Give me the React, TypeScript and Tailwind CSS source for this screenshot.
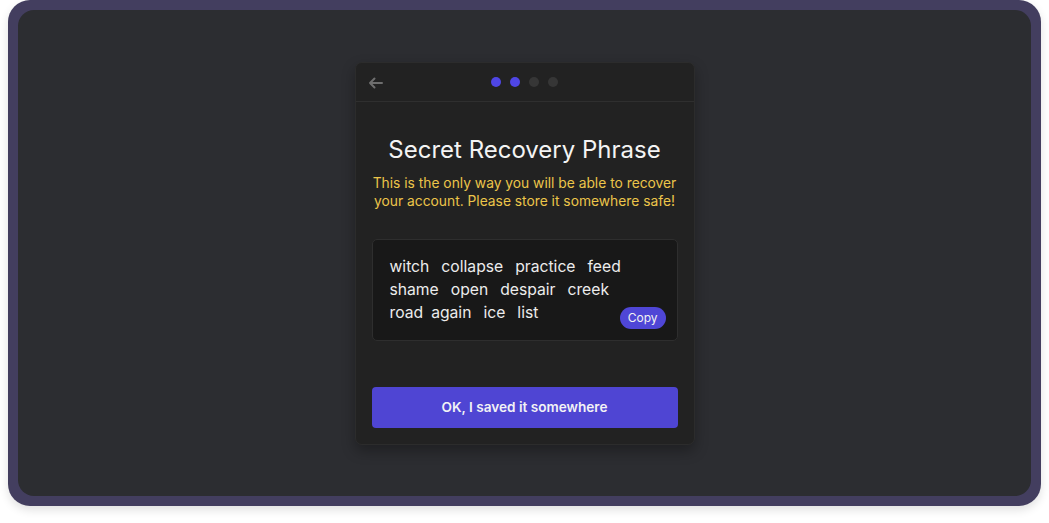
const rows = [
  ['witch', 'collapse', 'practice', 'feed'],
  ['shame', 'open', 'despair', 'creek'],
  ['road', 'again', 'ice', 'list'],
];

function Dots({ step, total }: { step: number; total: number }) {
  return (
    <div className="flex items-center gap-[9px]">
      {Array.from({ length: total }).map((_, i) => (
        <span
          key={i}
          className={`h-[10px] w-[10px] rounded-full ${i < step ? 'bg-[#4f46e5]' : 'bg-[#363636]'}`}
        />
      ))}
    </div>
  );
}

function BackArrow() {
  return (
    <svg width="15" height="12" viewBox="0 0 15 12" fill="none" className="absolute left-[12px] top-[14px]">
      <path d="M14 6H2M6.5 1.5L2 6l4.5 4.5" stroke="#6e6e6e" strokeWidth="2" strokeLinecap="round" strokeLinejoin="round" />
    </svg>
  );
}

export default function App() {
  return (
    <div className="bg-white h-[523px] w-[1049px] font-['Inter','Liberation_Sans',sans-serif]">
      <div className="mx-2 h-[506px] w-[1033px] rounded-[22px] bg-[#433e5f] p-[10px] shadow-[0_4px_10px_rgba(0,0,0,0.12)]">
        <div className="flex h-full items-center justify-center rounded-[16px] bg-[#2c2d31]">
          <div className="flex h-[383px] w-[340px] flex-col rounded-[7px] border border-[#2c2c2c] bg-[#222222] shadow-[0_6px_14px_rgba(0,0,0,0.3)]">
            <div className="relative flex h-[39px] shrink-0 items-center justify-center border-b border-[#2f2f2f]">
              <BackArrow />
              <Dots step={2} total={4} />
            </div>
            <div className="flex flex-1 flex-col px-4 pb-4 pt-[32px]">
              <h1 className="text-center text-[24px] leading-[32px] text-[#f4f4f4]">Secret Recovery Phrase</h1>
              <p className="-mx-[8px] mt-[8px] text-center text-[13.8px] leading-[18px] text-[#ecc54a]">
                This is the only way you will be able to recover your account. Please store it somewhere safe!
              </p>
              <div className="relative mt-[29px] h-[102px] rounded-[5px] border border-[#2e2e2e] bg-[#181818] pl-[17px] pt-[15px]">
                {rows.map((r, i) => (
                  <div key={i} className="flex gap-x-[12px] text-[15.7px] leading-[23px] text-[#ececec]">
                    {r.map((w, j) => (
                      <span key={w} className={i === 2 && j === 0 ? '-mr-[4px]' : ''}>
                        {w}
                      </span>
                    ))}
                  </div>
                ))}
                <button className="absolute bottom-[11px] right-[11px] flex h-[22px] items-center rounded-full bg-[#4f46d6] px-[8px] text-[12px] text-[#f2f2f2]">
                  Copy
                </button>
              </div>
              <button className="mt-auto flex h-[41px] items-center justify-center rounded-[4px] bg-[#4f45d3] text-[13.6px] font-semibold text-[#f2f2f5]">
                OK, I saved it somewhere
              </button>
            </div>
          </div>
        </div>
      </div>
    </div>
  );
}
